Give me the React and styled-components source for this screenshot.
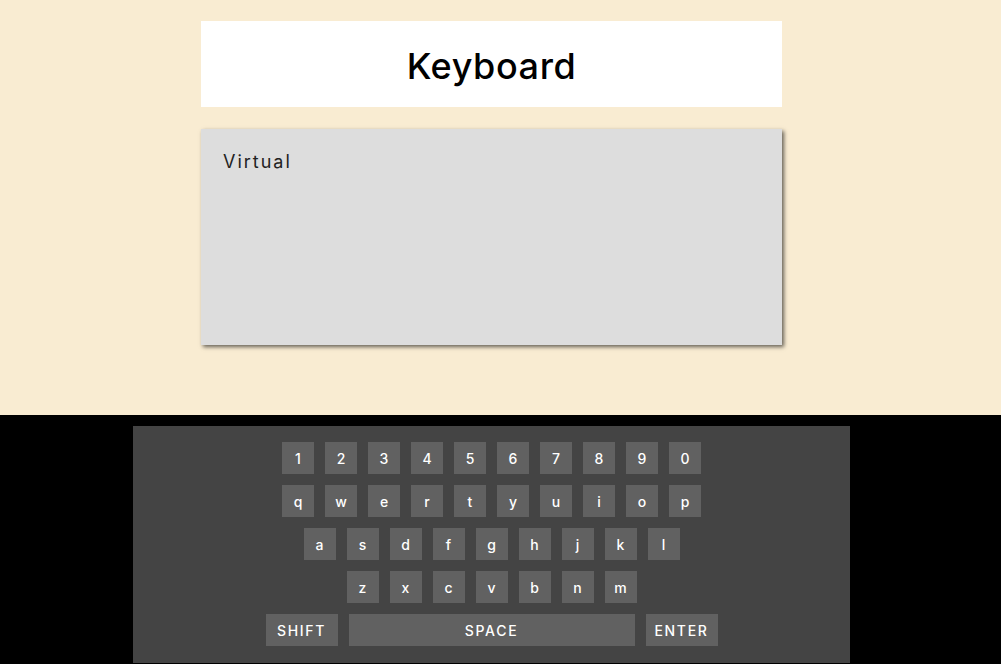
import React from "react";
import styled, { createGlobalStyle } from "styled-components";

const GlobalStyle = createGlobalStyle`
  html, body {
    margin: 0;
    padding: 0;
    background-color: #000;
    font-family: Inter, "Noto Sans", sans-serif;
  }
`;

const Top = styled.div`
  background-color: #f9ecd2;
  height: 415px;
  padding-top: 21px;
  box-sizing: border-box;
  display: flex;
  flex-direction: column;
  gap: 22px;
`;

const Header = styled.div`
  width: 581px;
  height: 86px;
  margin-left: 201px;
  padding-top: 3px;
  box-sizing: border-box;
  background-color: #fff;
  display: flex;
  align-items: center;
  justify-content: center;
`;

const Title = styled.h1`
  margin: 0;
  font-size: 36px;
  font-weight: 500;
  color: #000;
  letter-spacing: 0.6px;
`;

const Output = styled.div`
  width: 581px;
  height: 216px;
  margin-left: 201px;
  background-color: #dddddd;
  box-shadow: 2px 2px 4px rgba(0, 0, 0, 0.6);
  padding: 22px 22px;
  box-sizing: border-box;
`;

const OutputText = styled.p`
  margin: 0;
  font-size: 18px;
  letter-spacing: 2px;
  color: #222;
`;

const Bottom = styled.div`
  padding-top: 11px;
  height: 249px;
  box-sizing: border-box;
`;

const Panel = styled.div`
  width: 717px;
  height: 237px;
  margin-left: 133px;
  background-color: #444;
  padding-top: 16px;
  box-sizing: border-box;
  display: flex;
  flex-direction: column;
  align-items: center;
  gap: 11px;
`;

const Row = styled.div`
  display: flex;
  justify-content: center;
  gap: 11px;
`;

const Key = styled.button`
  width: ${(p) => p.$w || 32}px;
  height: 32px;
  border: none;
  padding: 0;
  padding-top: 1px;
  background-color: #616161;
  color: #fff;
  font-family: Inter, "Noto Sans", sans-serif;
  font-size: 14px;
  font-weight: 500;
  letter-spacing: ${(p) => (p.$wide ? "1.7px" : "0")};
  display: flex;
  align-items: center;
  justify-content: center;
  cursor: pointer;
`;

const rows = [
  ["1", "2", "3", "4", "5", "6", "7", "8", "9", "0"],
  ["q", "w", "e", "r", "t", "y", "u", "i", "o", "p"],
  ["a", "s", "d", "f", "g", "h", "j", "k", "l"],
  ["z", "x", "c", "v", "b", "n", "m"],
];

export default function App() {
  return (
    <>
      <GlobalStyle />
      <Top>
        <Header>
          <Title>Keyboard</Title>
        </Header>
        <Output>
          <OutputText>Virtual</OutputText>
        </Output>
      </Top>
      <Bottom>
        <Panel>
          {rows.map((row, i) => (
            <Row key={i}>
              {row.map((k) => (
                <Key key={k}>{k}</Key>
              ))}
            </Row>
          ))}
          <Row>
            <Key $w={72} $wide>SHIFT</Key>
            <Key $w={286} $wide>SPACE</Key>
            <Key $w={72} $wide>ENTER</Key>
          </Row>
        </Panel>
      </Bottom>
    </>
  );
}
